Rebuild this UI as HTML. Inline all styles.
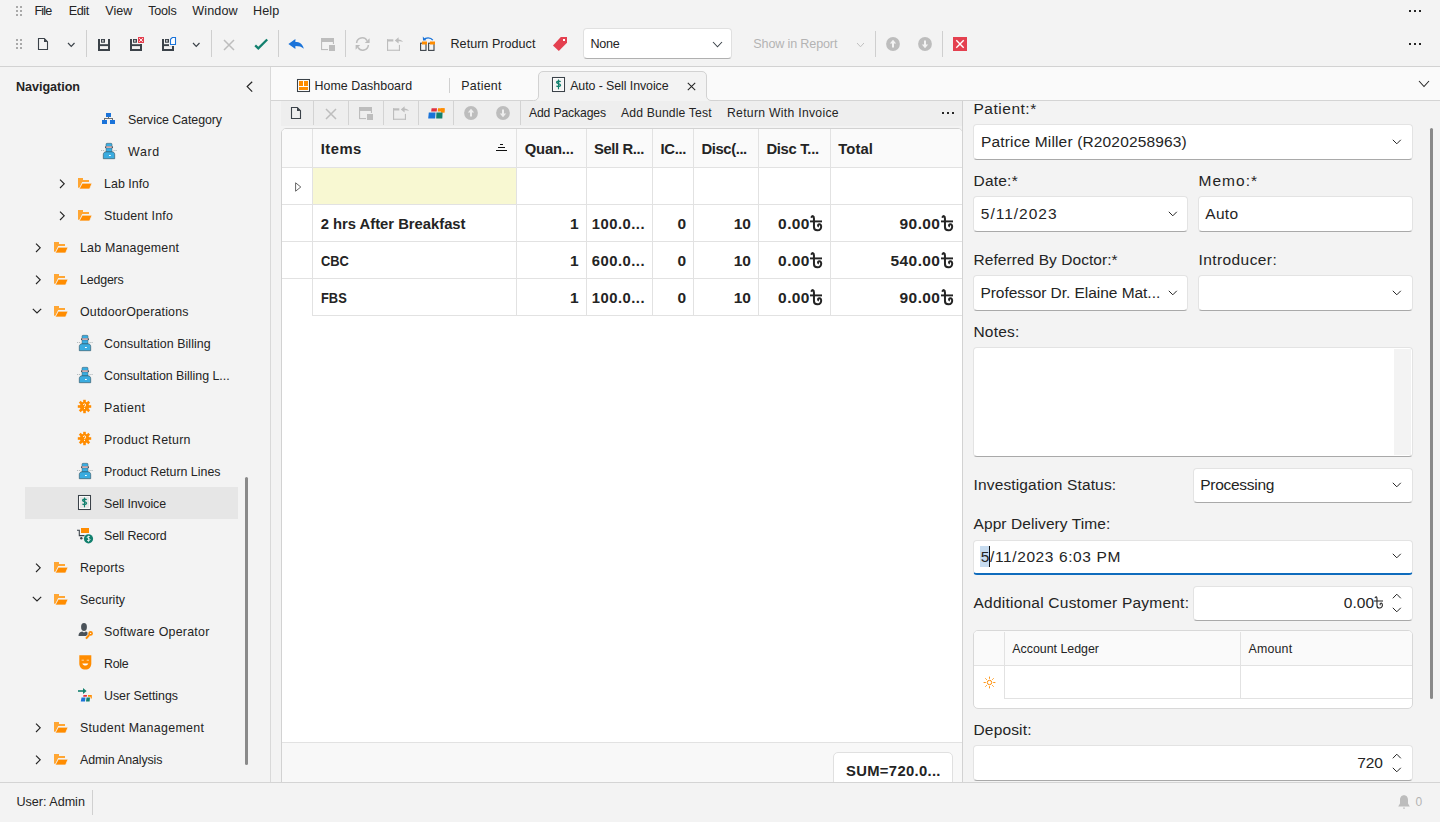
<!DOCTYPE html>
<html><head><meta charset="utf-8"><title>Sell Invoice</title>
<style>
html,body{margin:0;padding:0;}
body{width:1440px;height:822px;overflow:hidden;position:relative;background:#f3f3f3;font-family:"Liberation Sans", sans-serif;color:#242424;}
.t{position:absolute;line-height:1;white-space:nowrap;}
svg{display:block;overflow:visible}
</style></head><body>
<svg style="position:absolute;left:16px;top:6px" width="6" height="10" viewBox="0 0 6 10"><rect x="0" y="0" width="2" height="2" fill="#a9a9a9"/><rect x="0" y="4" width="2" height="2" fill="#a9a9a9"/><rect x="0" y="8" width="2" height="2" fill="#a9a9a9"/><rect x="4" y="0" width="2" height="2" fill="#a9a9a9"/><rect x="4" y="4" width="2" height="2" fill="#a9a9a9"/><rect x="4" y="8" width="2" height="2" fill="#a9a9a9"/></svg>
<div class="t" id="t1" style="left:34.40px;top:5px;font-size:12.6px;font-weight:normal;color:#242424;letter-spacing:-0.833px;">File</div>
<div class="t" id="t2" style="left:68.70px;top:5px;font-size:12.6px;font-weight:normal;color:#242424;letter-spacing:-0.400px;">Edit</div>
<div class="t" id="t3" style="left:105.20px;top:5px;font-size:12.6px;font-weight:normal;color:#242424;letter-spacing:0.033px;">View</div>
<div class="t" id="t4" style="left:148.30px;top:5px;font-size:12.6px;font-weight:normal;color:#242424;letter-spacing:-0.250px;">Tools</div>
<div class="t" id="t5" style="left:192.30px;top:5px;font-size:12.6px;font-weight:normal;color:#242424;letter-spacing:0.100px;">Window</div>
<div class="t" id="t6" style="left:253.00px;top:5px;font-size:12.6px;font-weight:normal;color:#242424;letter-spacing:0.083px;">Help</div>
<svg style="position:absolute;left:1409px;top:10px" width="13" height="3" viewBox="0 0 13 3"><rect x="0" y="0" width="2" height="2" fill="#262626"/><rect x="5" y="0" width="2" height="2" fill="#262626"/><rect x="10" y="0" width="2" height="2" fill="#262626"/></svg>
<svg style="position:absolute;left:16px;top:39px" width="6" height="10" viewBox="0 0 6 10"><rect x="0" y="0" width="2" height="2" fill="#a9a9a9"/><rect x="0" y="4" width="2" height="2" fill="#a9a9a9"/><rect x="0" y="8" width="2" height="2" fill="#a9a9a9"/><rect x="4" y="0" width="2" height="2" fill="#a9a9a9"/><rect x="4" y="4" width="2" height="2" fill="#a9a9a9"/><rect x="4" y="8" width="2" height="2" fill="#a9a9a9"/></svg>
<svg style="position:absolute;left:37.5px;top:37.5px" width="11" height="13" viewBox="0 0 11 13"><path d="M0.5 0.5 H6.3 L9.5 3.7 V11.5 H0.5 Z" fill="none" stroke="#3b4249" stroke-width="1.1"/><path d="M6 0.5 V4 H9.6 Z" fill="#3b4249"/></svg>
<svg style="position:absolute;left:66.8px;top:41.8px" width="8.5" height="5.3" viewBox="0 0 8.5 5.3"><path d="M1 1 L4.25 4.3 L7.5 1" fill="none" stroke="#3b4249" stroke-width="1.2"/></svg>
<div style="position:absolute;left:86px;top:30px;width:1px;height:27px;background:#cfcfcf"></div>
<svg style="position:absolute;left:98px;top:39px" width="12" height="12" viewBox="0 0 12 12"><rect x="0" y="0" width="2" height="12" fill="#3b4249"/><rect x="10" y="0" width="2" height="12" fill="#3b4249"/><rect x="0" y="10" width="12" height="2" fill="#3b4249"/><rect x="0" y="5.2" width="12" height="1.9" fill="#3b4249"/><rect x="3" y="0" width="4" height="3.7" fill="#3b4249"/><rect x="4.3" y="0.9" width="1.2" height="1.9" fill="#f3f3f3"/></svg>
<svg style="position:absolute;left:130px;top:39px" width="12" height="12" viewBox="0 0 12 12"><rect x="0" y="0" width="2" height="12" fill="#3b4249"/><rect x="10" y="0" width="2" height="12" fill="#3b4249"/><rect x="0" y="10" width="12" height="2" fill="#3b4249"/><rect x="0" y="5.2" width="12" height="1.9" fill="#3b4249"/><rect x="3" y="0" width="4" height="3.7" fill="#3b4249"/><rect x="4.3" y="0.9" width="1.2" height="1.9" fill="#f3f3f3"/></svg>
<svg style="position:absolute;left:137px;top:36px" width="8" height="8" viewBox="0 0 8 8"><rect x="0" y="0" width="8" height="8" fill="#f3f3f3"/><rect x="1" y="1" width="6" height="6" fill="#e4404f"/><path d="M2.2 2.2 L5.8 5.8 M5.8 2.2 L2.2 5.8" stroke="#fff" stroke-width="0.9"/></svg>
<svg style="position:absolute;left:162px;top:39px" width="12" height="12" viewBox="0 0 12 12"><rect x="0" y="0" width="2" height="12" fill="#3b4249"/><rect x="10" y="0" width="2" height="12" fill="#3b4249"/><rect x="0" y="10" width="12" height="2" fill="#3b4249"/><rect x="0" y="5.2" width="12" height="1.9" fill="#3b4249"/><rect x="3" y="0" width="4" height="3.7" fill="#3b4249"/><rect x="4.3" y="0.9" width="1.2" height="1.9" fill="#f3f3f3"/></svg>
<svg style="position:absolute;left:169px;top:36px" width="8" height="10" viewBox="0 0 8 10"><rect x="0" y="0" width="8" height="10" fill="#f3f3f3"/><path d="M3.3 1.5 H6.5 V8.5 H1.5 V3.3 Z" fill="#fff" stroke="#1a73d9" stroke-width="1.1"/></svg>
<svg style="position:absolute;left:191.8px;top:41.8px" width="8.5" height="5.3" viewBox="0 0 8.5 5.3"><path d="M1 1 L4.25 4.3 L7.5 1" fill="none" stroke="#3b4249" stroke-width="1.2"/></svg>
<div style="position:absolute;left:211px;top:30px;width:1px;height:27px;background:#cfcfcf"></div>
<svg style="position:absolute;left:223px;top:38.5px" width="12" height="12" viewBox="0 0 12 12"><path d="M1 1 L11 11 M11 1 L1 11" stroke="#bdbdbd" stroke-width="1.5"/></svg>
<svg style="position:absolute;left:253px;top:38px" width="16" height="13" viewBox="0 0 16 13"><path d="M2.2 7.3 L5.3 10.3 L14.2 1.5" fill="none" stroke="#12806e" stroke-width="2.3"/></svg>
<div style="position:absolute;left:278px;top:30px;width:1px;height:27px;background:#cfcfcf"></div>
<svg style="position:absolute;left:288px;top:38px" width="17" height="12" viewBox="0 0 17 12"><path d="M0.4 6 L7.4 1.1 V4.1 C11.5 4.1 14.8 6 15.8 10.8 C13.6 8.6 11 7.9 7.4 7.9 V11 Z" fill="#1a73d9"/></svg>
<svg style="position:absolute;left:321px;top:38px" width="15" height="13" viewBox="0 0 15 13"><rect x="0" y="0" width="13" height="4" fill="#bdbdbd"/><rect x="0" y="0" width="1.1" height="12" fill="#bdbdbd"/><rect x="0" y="11" width="7" height="1.1" fill="#bdbdbd"/><rect x="11.9" y="0" width="1.1" height="6" fill="#bdbdbd"/><rect x="8" y="7" width="6" height="6" fill="#bdbdbd"/></svg>
<div style="position:absolute;left:345px;top:30px;width:1px;height:27px;background:#cfcfcf"></div>
<svg style="position:absolute;left:355px;top:37px" width="15" height="14" viewBox="0 0 15 14"><path d="M1.6 6 A5.6 5.6 0 0 1 12 3.6" fill="none" stroke="#bdbdbd" stroke-width="1.5"/><path d="M14.6 1.2 V6 H9.8 Z" fill="#bdbdbd"/><path d="M13.4 8 A5.6 5.6 0 0 1 3 10.4" fill="none" stroke="#bdbdbd" stroke-width="1.5"/><path d="M0.6 12.8 V8 H5.2 Z" fill="#bdbdbd"/></svg>
<svg style="position:absolute;left:387px;top:37px" width="17" height="15" viewBox="0 0 17 15"><rect x="0" y="2.3" width="6.3" height="2.2" fill="#bdbdbd"/><rect x="0" y="2.3" width="1.1" height="11.5" fill="#bdbdbd"/><rect x="0" y="12.7" width="13" height="1.1" fill="#bdbdbd"/><rect x="11.9" y="7.9" width="1.1" height="5.9" fill="#bdbdbd"/><path d="M7.8 3.6 L11.6 0.2 V2.4 C13.5 2.4 15.2 3.2 16 5 C14.8 4.3 13.3 4 11.6 4.2 V6.6 Z" fill="#bdbdbd"/></svg>
<svg style="position:absolute;left:419px;top:35.5px" width="17" height="15" viewBox="0 0 17 15"><path d="M5 3.8 C6.5 1.3 11.5 0.8 13.8 4.2" fill="none" stroke="#1a73d9" stroke-width="1.3"/><path d="M3.8 0.6 L4 4.6 L7.4 4.2 Z" fill="#1a73d9"/><rect x="1.6" y="7.2" width="5.4" height="7.2" fill="none" stroke="#3b4249" stroke-width="1.1"/><rect x="9.6" y="7.2" width="5.4" height="7.2" fill="none" stroke="#3b4249" stroke-width="1.1"/><rect x="3" y="5.5" width="5" height="3" fill="#ff8c00"/><rect x="11" y="5.5" width="5" height="3" fill="#ff8c00"/></svg>
<div class="t" id="t7" style="left:450.50px;top:38px;font-size:12.6px;font-weight:normal;color:#242424;letter-spacing:0.015px;">Return Product</div>
<svg style="position:absolute;left:553px;top:37px" width="15" height="15" viewBox="0 0 15 15"><path d="M7.8 0 H14 V5.8 L5.8 14 L0 8.4 Z" fill="#e4404f"/><rect x="10" y="2" width="2" height="2" fill="#fff"/></svg>
<div style="position:absolute;left:583px;top:28px;width:149px;height:31px;background:#fff;border:1px solid #e0e0e0;border-bottom-color:#b0b0b0;border-radius:4px;box-sizing:border-box"></div>
<div class="t" id="t8" style="left:590.50px;top:38px;font-size:12.6px;font-weight:normal;color:#242424;letter-spacing:-0.267px;">None</div>
<svg style="position:absolute;left:711.7px;top:41px" width="11" height="6.8" viewBox="0 0 11 6.8"><path d="M1 1 L5.5 5.8 L10 1" fill="none" stroke="#3b4249" stroke-width="1.05"/></svg>
<div class="t" id="t9" style="left:753.30px;top:38px;font-size:12.6px;font-weight:normal;color:#b3b3b3;letter-spacing:-0.154px;">Show in Report</div>
<svg style="position:absolute;left:855.5px;top:42.3px" width="9" height="5.8" viewBox="0 0 9 5.8"><path d="M1 1 L4.5 4.8 L8 1" fill="none" stroke="#c0c0c0" stroke-width="1.0"/></svg>
<div style="position:absolute;left:875px;top:30.5px;width:1px;height:26.5px;background:#cfcfcf"></div>
<svg style="position:absolute;left:886px;top:37px" width="14" height="14" viewBox="0 0 14 14"><circle cx="7" cy="7" r="6.9" fill="#bdbdbd"/><path d="M7 2.8 L10.2 6.4 H8 V10.4 H6 V6.4 H3.8 Z" fill="#f3f3f3"/></svg>
<svg style="position:absolute;left:918px;top:37px" width="14" height="14" viewBox="0 0 14 14"><circle cx="7" cy="7" r="6.9" fill="#bdbdbd"/><path d="M7 11.2 L10.2 7.6 H8 V3.6 H6 V7.6 H3.8 Z" fill="#f3f3f3"/></svg>
<div style="position:absolute;left:942px;top:30.5px;width:1px;height:26.5px;background:#cfcfcf"></div>
<svg style="position:absolute;left:953px;top:37px" width="14" height="14" viewBox="0 0 14 14"><rect width="14" height="14" fill="#e4404f"/><path d="M3.3 3.3 L10.7 10.7 M10.7 3.3 L3.3 10.7" stroke="#fff" stroke-width="1.4"/></svg>
<svg style="position:absolute;left:1409px;top:43px" width="13" height="3" viewBox="0 0 13 3"><rect x="0" y="0" width="2" height="2" fill="#262626"/><rect x="5" y="0" width="2" height="2" fill="#262626"/><rect x="10" y="0" width="2" height="2" fill="#262626"/></svg>
<div style="position:absolute;left:0px;top:66px;width:1440px;height:1px;background:#d2d2d2"></div>
<div style="position:absolute;left:270px;top:67px;width:1px;height:715px;background:#d9d9d9"></div>
<div class="t" id="t10" style="left:16.00px;top:81px;font-size:12.6px;font-weight:bold;color:#242424;letter-spacing:-0.044px;">Navigation</div>
<svg style="position:absolute;left:246px;top:81px" width="8" height="12" viewBox="0 0 8 12"><path d="M6.2 0.8 L1.2 5.6 L6.2 10.6" fill="none" stroke="#242424" stroke-width="1.2"/></svg>
<div style="position:absolute;left:25px;top:487px;width:213px;height:32px;background:#e6e6e6"></div>
<svg style="position:absolute;left:102px;top:113px" width="13" height="11" viewBox="0 0 13 11"><rect x="4" y="0" width="5" height="4" fill="#1a73d9"/><rect x="0" y="7" width="5" height="4" fill="#1a73d9"/><rect x="8" y="7" width="5" height="4" fill="#1a73d9"/><rect x="6" y="4" width="1" height="1" fill="#707070"/><rect x="2" y="5" width="9" height="1" fill="#707070"/><rect x="2" y="6" width="1" height="1" fill="#707070"/><rect x="10" y="6" width="1" height="1" fill="#707070"/></svg>
<div class="t" id="t11" style="left:128.00px;top:114px;font-size:12.4px;font-weight:normal;color:#242424;letter-spacing:-0.067px;">Service Category</div>
<svg style="position:absolute;left:101px;top:143px" width="16" height="16" viewBox="0 0 16 16"><path d="M0 7.5 H3.5 M12.5 7.5 H16" stroke="#99a3a8" stroke-width="0.7" stroke-dasharray="1.2 0.8"/><rect x="5" y="0.3" width="6" height="3.4" rx="1" fill="#3aace0" stroke="#3d5560" stroke-width="0.5"/><rect x="4" y="3.3" width="8" height="1.8" fill="#4a5a62"/><rect x="5.2" y="3.4" width="5.6" height="1.6" fill="#f4c4c8"/><rect x="5" y="5" width="6" height="4" fill="#3aace0" stroke="#3d5560" stroke-width="0.4"/><path d="M2.3 15.7 V11.5 C2.3 9.8 3.5 8.8 5 8.8 H11 C12.5 8.8 13.7 9.8 13.7 11.5 V15.7 Z" fill="#3aace0" stroke="#2f4d5a" stroke-width="0.6"/><rect x="8" y="12" width="1.8" height="1" fill="#fff"/></svg>
<div class="t" id="t12" style="left:128.00px;top:146px;font-size:12.4px;font-weight:normal;color:#242424;letter-spacing:0.700px;">Ward</div>
<svg style="position:absolute;left:58.5px;top:178.5px" width="7" height="10" viewBox="0 0 7 10"><path d="M1 0.6 L5.2 4.8 L1 9" fill="none" stroke="#242424" stroke-width="1.15"/></svg>
<svg style="position:absolute;left:78px;top:178px" width="15" height="12" viewBox="0 0 15 12"><path d="M0 0 H5 V2 H11 V4 H4.2 L1.6 9.8 H0 Z" fill="#ffa633"/><path d="M4.3 5.2 H14 L11.6 11 H1.2 Z" fill="#ff8c00" stroke="#f3f3f3" stroke-width="0.7"/></svg>
<div class="t" id="t13" style="left:104.00px;top:178px;font-size:12.4px;font-weight:normal;color:#242424;letter-spacing:0.057px;">Lab Info</div>
<svg style="position:absolute;left:58.5px;top:210.5px" width="7" height="10" viewBox="0 0 7 10"><path d="M1 0.6 L5.2 4.8 L1 9" fill="none" stroke="#242424" stroke-width="1.15"/></svg>
<svg style="position:absolute;left:78px;top:210px" width="15" height="12" viewBox="0 0 15 12"><path d="M0 0 H5 V2 H11 V4 H4.2 L1.6 9.8 H0 Z" fill="#ffa633"/><path d="M4.3 5.2 H14 L11.6 11 H1.2 Z" fill="#ff8c00" stroke="#f3f3f3" stroke-width="0.7"/></svg>
<div class="t" id="t14" style="left:104.00px;top:210px;font-size:12.4px;font-weight:normal;color:#242424;letter-spacing:0.182px;">Student Info</div>
<svg style="position:absolute;left:34.5px;top:242.5px" width="7" height="10" viewBox="0 0 7 10"><path d="M1 0.6 L5.2 4.8 L1 9" fill="none" stroke="#242424" stroke-width="1.15"/></svg>
<svg style="position:absolute;left:54px;top:242px" width="15" height="12" viewBox="0 0 15 12"><path d="M0 0 H5 V2 H11 V4 H4.2 L1.6 9.8 H0 Z" fill="#ffa633"/><path d="M4.3 5.2 H14 L11.6 11 H1.2 Z" fill="#ff8c00" stroke="#f3f3f3" stroke-width="0.7"/></svg>
<div class="t" id="t15" style="left:80.00px;top:242px;font-size:12.4px;font-weight:normal;color:#242424;letter-spacing:0.192px;">Lab Management</div>
<svg style="position:absolute;left:34.5px;top:274.5px" width="7" height="10" viewBox="0 0 7 10"><path d="M1 0.6 L5.2 4.8 L1 9" fill="none" stroke="#242424" stroke-width="1.15"/></svg>
<svg style="position:absolute;left:54px;top:274px" width="15" height="12" viewBox="0 0 15 12"><path d="M0 0 H5 V2 H11 V4 H4.2 L1.6 9.8 H0 Z" fill="#ffa633"/><path d="M4.3 5.2 H14 L11.6 11 H1.2 Z" fill="#ff8c00" stroke="#f3f3f3" stroke-width="0.7"/></svg>
<div class="t" id="t16" style="left:80.00px;top:274px;font-size:12.4px;font-weight:normal;color:#242424;letter-spacing:-0.167px;">Ledgers</div>
<svg style="position:absolute;left:31.8px;top:308px" width="11" height="7" viewBox="0 0 11 7"><path d="M0.8 0.8 L5 5 L9.2 0.8" fill="none" stroke="#242424" stroke-width="1.15"/></svg>
<svg style="position:absolute;left:54px;top:306px" width="15" height="12" viewBox="0 0 15 12"><path d="M0 0 H5 V2 H11 V4 H4.2 L1.6 9.8 H0 Z" fill="#ffa633"/><path d="M4.3 5.2 H14 L11.6 11 H1.2 Z" fill="#ff8c00" stroke="#f3f3f3" stroke-width="0.7"/></svg>
<div class="t" id="t17" style="left:80.00px;top:306px;font-size:12.4px;font-weight:normal;color:#242424;letter-spacing:0.194px;">OutdoorOperations</div>
<svg style="position:absolute;left:77px;top:335px" width="16" height="16" viewBox="0 0 16 16"><path d="M0 7.5 H3.5 M12.5 7.5 H16" stroke="#99a3a8" stroke-width="0.7" stroke-dasharray="1.2 0.8"/><rect x="5" y="0.3" width="6" height="3.4" rx="1" fill="#3aace0" stroke="#3d5560" stroke-width="0.5"/><rect x="4" y="3.3" width="8" height="1.8" fill="#4a5a62"/><rect x="5.2" y="3.4" width="5.6" height="1.6" fill="#f4c4c8"/><rect x="5" y="5" width="6" height="4" fill="#3aace0" stroke="#3d5560" stroke-width="0.4"/><path d="M2.3 15.7 V11.5 C2.3 9.8 3.5 8.8 5 8.8 H11 C12.5 8.8 13.7 9.8 13.7 11.5 V15.7 Z" fill="#3aace0" stroke="#2f4d5a" stroke-width="0.6"/><rect x="8" y="12" width="1.8" height="1" fill="#fff"/></svg>
<div class="t" id="t18" style="left:104.00px;top:338px;font-size:12.4px;font-weight:normal;color:#242424;letter-spacing:0.068px;">Consultation Billing</div>
<svg style="position:absolute;left:77px;top:367px" width="16" height="16" viewBox="0 0 16 16"><path d="M0 7.5 H3.5 M12.5 7.5 H16" stroke="#99a3a8" stroke-width="0.7" stroke-dasharray="1.2 0.8"/><rect x="5" y="0.3" width="6" height="3.4" rx="1" fill="#3aace0" stroke="#3d5560" stroke-width="0.5"/><rect x="4" y="3.3" width="8" height="1.8" fill="#4a5a62"/><rect x="5.2" y="3.4" width="5.6" height="1.6" fill="#f4c4c8"/><rect x="5" y="5" width="6" height="4" fill="#3aace0" stroke="#3d5560" stroke-width="0.4"/><path d="M2.3 15.7 V11.5 C2.3 9.8 3.5 8.8 5 8.8 H11 C12.5 8.8 13.7 9.8 13.7 11.5 V15.7 Z" fill="#3aace0" stroke="#2f4d5a" stroke-width="0.6"/><rect x="8" y="12" width="1.8" height="1" fill="#fff"/></svg>
<div class="t" id="t19" style="left:104.00px;top:370px;font-size:12.4px;font-weight:normal;color:#242424;letter-spacing:-0.017px;">Consultation Billing L...</div>
<svg style="position:absolute;left:78px;top:400px" width="13" height="13" viewBox="0 0 13 13"><rect x="5.2" y="-0.2" width="2.6" height="3" fill="#ff8c00" transform="rotate(0 6.5 6.5)"/><rect x="5.2" y="-0.2" width="2.6" height="3" fill="#ff8c00" transform="rotate(45 6.5 6.5)"/><rect x="5.2" y="-0.2" width="2.6" height="3" fill="#ff8c00" transform="rotate(90 6.5 6.5)"/><rect x="5.2" y="-0.2" width="2.6" height="3" fill="#ff8c00" transform="rotate(135 6.5 6.5)"/><rect x="5.2" y="-0.2" width="2.6" height="3" fill="#ff8c00" transform="rotate(180 6.5 6.5)"/><rect x="5.2" y="-0.2" width="2.6" height="3" fill="#ff8c00" transform="rotate(225 6.5 6.5)"/><rect x="5.2" y="-0.2" width="2.6" height="3" fill="#ff8c00" transform="rotate(270 6.5 6.5)"/><rect x="5.2" y="-0.2" width="2.6" height="3" fill="#ff8c00" transform="rotate(315 6.5 6.5)"/><circle cx="6.5" cy="6.5" r="4.7" fill="#ff8c00"/><path d="M5.3 5 C5.3 3.5 7.7 3.5 7.7 5 C7.7 5.9 6.5 6 6.5 7.1" fill="none" stroke="#fff" stroke-width="0.9"/><rect x="6" y="7.9" width="1" height="1" fill="#fff"/></svg>
<div class="t" id="t20" style="left:104.00px;top:402px;font-size:12.4px;font-weight:normal;color:#242424;letter-spacing:0.400px;">Patient</div>
<svg style="position:absolute;left:78px;top:432px" width="13" height="13" viewBox="0 0 13 13"><rect x="5.2" y="-0.2" width="2.6" height="3" fill="#ff8c00" transform="rotate(0 6.5 6.5)"/><rect x="5.2" y="-0.2" width="2.6" height="3" fill="#ff8c00" transform="rotate(45 6.5 6.5)"/><rect x="5.2" y="-0.2" width="2.6" height="3" fill="#ff8c00" transform="rotate(90 6.5 6.5)"/><rect x="5.2" y="-0.2" width="2.6" height="3" fill="#ff8c00" transform="rotate(135 6.5 6.5)"/><rect x="5.2" y="-0.2" width="2.6" height="3" fill="#ff8c00" transform="rotate(180 6.5 6.5)"/><rect x="5.2" y="-0.2" width="2.6" height="3" fill="#ff8c00" transform="rotate(225 6.5 6.5)"/><rect x="5.2" y="-0.2" width="2.6" height="3" fill="#ff8c00" transform="rotate(270 6.5 6.5)"/><rect x="5.2" y="-0.2" width="2.6" height="3" fill="#ff8c00" transform="rotate(315 6.5 6.5)"/><circle cx="6.5" cy="6.5" r="4.7" fill="#ff8c00"/><path d="M5.3 5 C5.3 3.5 7.7 3.5 7.7 5 C7.7 5.9 6.5 6 6.5 7.1" fill="none" stroke="#fff" stroke-width="0.9"/><rect x="6" y="7.9" width="1" height="1" fill="#fff"/></svg>
<div class="t" id="t21" style="left:104.00px;top:434px;font-size:12.4px;font-weight:normal;color:#242424;letter-spacing:0.238px;">Product Return</div>
<svg style="position:absolute;left:77px;top:463px" width="16" height="16" viewBox="0 0 16 16"><path d="M0 7.5 H3.5 M12.5 7.5 H16" stroke="#99a3a8" stroke-width="0.7" stroke-dasharray="1.2 0.8"/><rect x="5" y="0.3" width="6" height="3.4" rx="1" fill="#3aace0" stroke="#3d5560" stroke-width="0.5"/><rect x="4" y="3.3" width="8" height="1.8" fill="#4a5a62"/><rect x="5.2" y="3.4" width="5.6" height="1.6" fill="#f4c4c8"/><rect x="5" y="5" width="6" height="4" fill="#3aace0" stroke="#3d5560" stroke-width="0.4"/><path d="M2.3 15.7 V11.5 C2.3 9.8 3.5 8.8 5 8.8 H11 C12.5 8.8 13.7 9.8 13.7 11.5 V15.7 Z" fill="#3aace0" stroke="#2f4d5a" stroke-width="0.6"/><rect x="8" y="12" width="1.8" height="1" fill="#fff"/></svg>
<div class="t" id="t22" style="left:104.00px;top:466px;font-size:12.4px;font-weight:normal;color:#242424;letter-spacing:0.005px;">Product Return Lines</div>
<svg style="position:absolute;left:78px;top:495px" width="13" height="15" viewBox="0 0 13 15"><rect x="0.5" y="0.5" width="12" height="14" fill="#fff" stroke="#3b4249" stroke-width="1.05"/><rect x="2" y="2" width="9" height="11" fill="#e6e6e6"/><path d="M8.4 5 C8.2 4 4.6 3.8 4.6 5.3 C4.6 6.9 8.5 6.4 8.5 8.2 C8.5 9.8 4.8 9.7 4.5 8.8" fill="none" stroke="#12806e" stroke-width="1.4"/><path d="M6.5 2.5 V12.3" stroke="#12806e" stroke-width="1.1"/></svg>
<div class="t" id="t23" style="left:104.00px;top:498px;font-size:12.4px;font-weight:normal;color:#242424;letter-spacing:-0.118px;">Sell Invoice</div>
<svg style="position:absolute;left:77px;top:527.5px" width="16" height="16" viewBox="0 0 16 16"><rect x="4" y="0" width="8" height="5" fill="#ff8c00"/><path d="M0 2.3 H2.3 V7.6 H7.5" fill="none" stroke="#3b4249" stroke-width="1.1"/><circle cx="4.3" cy="10.2" r="1.2" fill="#3b4249"/><circle cx="11.5" cy="10.8" r="4.6" fill="#12806e"/><path d="M13 9 C12.8 8.2 10.2 8.1 10.2 9.3 C10.2 10.6 13 10.2 13 11.6 C13 12.9 10.4 12.9 10 12.2" fill="none" stroke="#fff" stroke-width="0.9"/><path d="M11.5 7.8 V13.8" stroke="#fff" stroke-width="0.7"/></svg>
<div class="t" id="t24" style="left:104.00px;top:530px;font-size:12.4px;font-weight:normal;color:#242424;letter-spacing:-0.130px;">Sell Record</div>
<svg style="position:absolute;left:34.5px;top:562.5px" width="7" height="10" viewBox="0 0 7 10"><path d="M1 0.6 L5.2 4.8 L1 9" fill="none" stroke="#242424" stroke-width="1.15"/></svg>
<svg style="position:absolute;left:54px;top:562px" width="15" height="12" viewBox="0 0 15 12"><path d="M0 0 H5 V2 H11 V4 H4.2 L1.6 9.8 H0 Z" fill="#ffa633"/><path d="M4.3 5.2 H14 L11.6 11 H1.2 Z" fill="#ff8c00" stroke="#f3f3f3" stroke-width="0.7"/></svg>
<div class="t" id="t25" style="left:80.00px;top:562px;font-size:12.4px;font-weight:normal;color:#242424;letter-spacing:0.167px;">Reports</div>
<svg style="position:absolute;left:31.8px;top:596px" width="11" height="7" viewBox="0 0 11 7"><path d="M0.8 0.8 L5 5 L9.2 0.8" fill="none" stroke="#242424" stroke-width="1.15"/></svg>
<svg style="position:absolute;left:54px;top:594px" width="15" height="12" viewBox="0 0 15 12"><path d="M0 0 H5 V2 H11 V4 H4.2 L1.6 9.8 H0 Z" fill="#ffa633"/><path d="M4.3 5.2 H14 L11.6 11 H1.2 Z" fill="#ff8c00" stroke="#f3f3f3" stroke-width="0.7"/></svg>
<div class="t" id="t26" style="left:80.00px;top:594px;font-size:12.4px;font-weight:normal;color:#242424;letter-spacing:0.043px;">Security</div>
<svg style="position:absolute;left:77.5px;top:623px" width="16" height="17" viewBox="0 0 16 17"><ellipse cx="6" cy="4" rx="2.9" ry="3.9" fill="#4a5259"/><path d="M0.5 13 C0.5 10 2 9 4.2 8.6 L6 9.6 L7.8 8.6 C8.6 8.8 9.2 9 9.5 9.4 V11.5 L8 13 Z" fill="#4a5259"/><circle cx="12.6" cy="10.4" r="2.3" fill="#ff8c00"/><circle cx="12.6" cy="10.4" r="0.7" fill="#f3f3f3"/><path d="M11.2 12 L8 15.6" stroke="#ff8c00" stroke-width="2"/></svg>
<div class="t" id="t27" style="left:104.00px;top:626px;font-size:12.4px;font-weight:normal;color:#242424;letter-spacing:0.256px;">Software Operator</div>
<svg style="position:absolute;left:79px;top:655px" width="13" height="15" viewBox="0 0 13 15"><path d="M0.3 0.3 H12.3 V8.5 C12.3 12.2 9.8 14.6 6.3 14.6 C2.8 14.6 0.3 12.2 0.3 8.5 Z" fill="#ff8c00"/><path d="M2.6 5.2 H4.9 M7.7 5.2 H10" stroke="#ffe0b0" stroke-width="0.9"/><path d="M3.3 8.5 C4.5 11.3 8.1 11.3 9.3 8.5 Z" fill="#fff"/></svg>
<div class="t" id="t28" style="left:104.00px;top:658px;font-size:12.4px;font-weight:normal;color:#242424;letter-spacing:-0.300px;">Role</div>
<svg style="position:absolute;left:77.5px;top:687.5px" width="15" height="15" viewBox="0 0 15 15"><path d="M0 3 H6" stroke="#12806e" stroke-width="1.6"/><path d="M5 0 L8.6 3 L5 6 Z" fill="#12806e"/><path d="M5.5 7 H9 L8.8 8.8 H5.2 Z" fill="#e0303f"/><path d="M10 7 H13.8 V10.5 H12.6 V8.8 H10 Z" fill="#ff8c00"/><path d="M3.5 9.5 H7.5 L7 13.5 H2.8 Z" fill="#1a73d9"/><path d="M8.5 9.5 H12 L11.6 13.5 H8 Z" fill="#12806e"/></svg>
<div class="t" id="t29" style="left:104.00px;top:690px;font-size:12.4px;font-weight:normal;color:#242424;letter-spacing:-0.033px;">User Settings</div>
<svg style="position:absolute;left:34.5px;top:722.5px" width="7" height="10" viewBox="0 0 7 10"><path d="M1 0.6 L5.2 4.8 L1 9" fill="none" stroke="#242424" stroke-width="1.15"/></svg>
<svg style="position:absolute;left:54px;top:722px" width="15" height="12" viewBox="0 0 15 12"><path d="M0 0 H5 V2 H11 V4 H4.2 L1.6 9.8 H0 Z" fill="#ffa633"/><path d="M4.3 5.2 H14 L11.6 11 H1.2 Z" fill="#ff8c00" stroke="#f3f3f3" stroke-width="0.7"/></svg>
<div class="t" id="t30" style="left:80.00px;top:722px;font-size:12.4px;font-weight:normal;color:#242424;letter-spacing:0.318px;">Student Management</div>
<svg style="position:absolute;left:34.5px;top:754.5px" width="7" height="10" viewBox="0 0 7 10"><path d="M1 0.6 L5.2 4.8 L1 9" fill="none" stroke="#242424" stroke-width="1.15"/></svg>
<svg style="position:absolute;left:54px;top:754px" width="15" height="12" viewBox="0 0 15 12"><path d="M0 0 H5 V2 H11 V4 H4.2 L1.6 9.8 H0 Z" fill="#ffa633"/><path d="M4.3 5.2 H14 L11.6 11 H1.2 Z" fill="#ff8c00" stroke="#f3f3f3" stroke-width="0.7"/></svg>
<div class="t" id="t31" style="left:80.00px;top:754px;font-size:12.4px;font-weight:normal;color:#242424;letter-spacing:-0.123px;">Admin Analysis</div>
<div style="position:absolute;left:245px;top:477px;width:3px;height:288px;background:#8a8a8a;border-radius:1.5px"></div>
<div style="position:absolute;left:271px;top:67px;width:1169px;height:33px;background:#fafafa"></div>
<div style="position:absolute;left:271px;top:100px;width:262px;height:1px;background:#d4d4d4"></div>
<div style="position:absolute;left:712px;top:100px;width:728px;height:1px;background:#d4d4d4"></div>
<svg style="position:absolute;left:297px;top:79px" width="13" height="13" viewBox="0 0 13 13"><rect x="0.5" y="0.5" width="12" height="12" fill="#fff" stroke="#3b4249" stroke-width="1.05"/><rect x="2" y="2" width="4" height="5" fill="#ff8c00"/><rect x="7" y="2" width="4" height="5" fill="#ff8c00"/><rect x="2" y="8" width="9" height="3" fill="#ff8c00"/></svg>
<div class="t" id="t32" style="left:314.50px;top:80px;font-size:12.4px;font-weight:normal;color:#242424;letter-spacing:0.038px;">Home Dashboard</div>
<div style="position:absolute;left:449px;top:78px;width:1px;height:15px;background:#d0d0d0"></div>
<div class="t" id="t33" style="left:461.30px;top:80px;font-size:12.4px;font-weight:normal;color:#242424;letter-spacing:0.250px;">Patient</div>
<svg style="position:absolute;left:528px;top:66px" width="190" height="35" viewBox="0 0 190 35"><path d="M0 35 H5.5 A4.5 4.5 0 0 0 10.5 30.5 V10 A4.5 4.5 0 0 1 15 5.5 H174 A4.5 4.5 0 0 1 178.5 10 V30.5 A4.5 4.5 0 0 0 183 35 Z" fill="#f3f3f3"/><path d="M0 34.5 H5.5 A4.5 4.5 0 0 0 10.5 30 V10 A4.5 4.5 0 0 1 15 5.5 H174 A4.5 4.5 0 0 1 178.5 10 V30 A4.5 4.5 0 0 0 183 34.5 H190" fill="none" stroke="#d2d2d2" stroke-width="1"/></svg>
<svg style="position:absolute;left:552px;top:77px" width="13" height="15" viewBox="0 0 13 15"><rect x="0.5" y="0.5" width="12" height="14" fill="#fff" stroke="#3b4249" stroke-width="1.05"/><rect x="2" y="2" width="9" height="11" fill="#f3f3f3"/><path d="M8.4 5 C8.2 4 4.6 3.8 4.6 5.3 C4.6 6.9 8.5 6.4 8.5 8.2 C8.5 9.8 4.8 9.7 4.5 8.8" fill="none" stroke="#12806e" stroke-width="1.4"/><path d="M6.5 2.5 V12.3" stroke="#12806e" stroke-width="1.1"/></svg>
<div class="t" id="t34" style="left:570.20px;top:80px;font-size:12.4px;font-weight:normal;color:#242424;letter-spacing:-0.083px;">Auto - Sell Invoice</div>
<svg style="position:absolute;left:687px;top:82px" width="9" height="9" viewBox="0 0 9 9"><path d="M0.8 0.8 L8.2 8.2 M8.2 0.8 L0.8 8.2" stroke="#242424" stroke-width="1.05"/></svg>
<svg style="position:absolute;left:1418px;top:79.5px" width="12" height="7.5" viewBox="0 0 12 7.5"><path d="M1 1 L6.0 6.5 L11 1" fill="none" stroke="#242424" stroke-width="1.05"/></svg>
<div style="position:absolute;left:281px;top:101px;width:682px;height:25px;background:#eeeeee"></div>
<div style="position:absolute;left:313px;top:101px;width:1px;height:24px;background:#d3d3d3"></div>
<div style="position:absolute;left:348px;top:101px;width:1px;height:24px;background:#d3d3d3"></div>
<div style="position:absolute;left:383px;top:101px;width:1px;height:24px;background:#d3d3d3"></div>
<div style="position:absolute;left:418px;top:101px;width:1px;height:24px;background:#d3d3d3"></div>
<div style="position:absolute;left:453px;top:101px;width:1px;height:24px;background:#d3d3d3"></div>
<div style="position:absolute;left:520px;top:101px;width:1px;height:24px;background:#d3d3d3"></div>
<svg style="position:absolute;left:291px;top:107px" width="11" height="13" viewBox="0 0 11 13"><path d="M0.5 0.5 H6.3 L9.5 3.7 V11.5 H0.5 Z" fill="none" stroke="#3b4249" stroke-width="1.1"/><path d="M6 0.5 V4 H9.6 Z" fill="#3b4249"/></svg>
<svg style="position:absolute;left:325px;top:107.5px" width="12" height="12" viewBox="0 0 12 12"><path d="M1 1 L11 11 M11 1 L1 11" stroke="#bdbdbd" stroke-width="1.5"/></svg>
<svg style="position:absolute;left:359px;top:107px" width="15" height="13" viewBox="0 0 15 13"><rect x="0" y="0" width="13" height="4" fill="#bdbdbd"/><rect x="0" y="0" width="1.1" height="12" fill="#bdbdbd"/><rect x="0" y="11" width="7" height="1.1" fill="#bdbdbd"/><rect x="11.9" y="0" width="1.1" height="6" fill="#bdbdbd"/><rect x="8" y="7" width="6" height="6" fill="#bdbdbd"/></svg>
<svg style="position:absolute;left:393px;top:105.5px" width="17" height="15" viewBox="0 0 17 15"><rect x="0" y="2.3" width="6.3" height="2.2" fill="#bdbdbd"/><rect x="0" y="2.3" width="1.1" height="11.5" fill="#bdbdbd"/><rect x="0" y="12.7" width="13" height="1.1" fill="#bdbdbd"/><rect x="11.9" y="7.9" width="1.1" height="5.9" fill="#bdbdbd"/><path d="M7.8 3.6 L11.6 0.2 V2.4 C13.5 2.4 15.2 3.2 16 5 C14.8 4.3 13.3 4 11.6 4.2 V6.6 Z" fill="#bdbdbd"/></svg>
<svg style="position:absolute;left:427.5px;top:107.5px" width="17" height="11" viewBox="0 0 17 11"><path d="M3.6 0.3 H9 L8.7 3.6 H3.2 Z" fill="#e0303f"/><path d="M10 0.3 H16.6 L16.3 3.6 H9.7 Z" fill="#ff8c00"/><rect x="13" y="0.3" width="3.6" height="4.4" fill="#ff8c00"/><path d="M0.8 4.6 H7.5 L7.2 10.6 H0.2 Z" fill="#1a73d9"/><path d="M8.4 4.6 H14.6 L14.3 10.6 H8.2 Z" fill="#12806e"/></svg>
<svg style="position:absolute;left:464px;top:106px" width="14" height="14" viewBox="0 0 14 14"><circle cx="7" cy="7" r="6.9" fill="#bdbdbd"/><path d="M7 2.8 L10.2 6.4 H8 V10.4 H6 V6.4 H3.8 Z" fill="#eeeeee"/></svg>
<svg style="position:absolute;left:496px;top:106px" width="14" height="14" viewBox="0 0 14 14"><circle cx="7" cy="7" r="6.9" fill="#bdbdbd"/><path d="M7 11.2 L10.2 7.6 H8 V3.6 H6 V7.6 H3.8 Z" fill="#eeeeee"/></svg>
<div class="t" id="t35" style="left:529.00px;top:107px;font-size:12.2px;font-weight:normal;color:#242424;letter-spacing:-0.145px;">Add Packages</div>
<div class="t" id="t36" style="left:621.00px;top:107px;font-size:12.2px;font-weight:normal;color:#242424;letter-spacing:0.150px;">Add Bundle Test</div>
<div class="t" id="t37" style="left:727.00px;top:107px;font-size:12.2px;font-weight:normal;color:#242424;letter-spacing:0.292px;">Return With Invoice</div>
<svg style="position:absolute;left:942px;top:112px" width="13" height="3" viewBox="0 0 13 3"><rect x="0" y="0" width="2" height="2" fill="#262626"/><rect x="5" y="0" width="2" height="2" fill="#262626"/><rect x="10" y="0" width="2" height="2" fill="#262626"/></svg>
<div style="position:absolute;left:281px;top:128px;width:682px;height:700px;background:#fff;border:1px solid #d2d2d2;border-radius:5px;box-sizing:border-box"></div>
<div style="position:absolute;left:282px;top:129px;width:680px;height:38px;background:#fafafa;border-radius:4px 4px 0 0"></div>
<div style="position:absolute;left:282px;top:167px;width:680px;height:1px;background:#e2e2e2"></div>
<div style="position:absolute;left:312px;top:129px;width:1px;height:186px;background:#e2e2e2"></div>
<div style="position:absolute;left:516px;top:129px;width:1px;height:186px;background:#e2e2e2"></div>
<div style="position:absolute;left:586px;top:129px;width:1px;height:186px;background:#e2e2e2"></div>
<div style="position:absolute;left:652px;top:129px;width:1px;height:186px;background:#e2e2e2"></div>
<div style="position:absolute;left:693px;top:129px;width:1px;height:186px;background:#e2e2e2"></div>
<div style="position:absolute;left:758px;top:129px;width:1px;height:186px;background:#e2e2e2"></div>
<div style="position:absolute;left:830px;top:129px;width:1px;height:186px;background:#e2e2e2"></div>
<div style="position:absolute;left:282px;top:204px;width:680px;height:1px;background:#e2e2e2"></div>
<div style="position:absolute;left:282px;top:241px;width:680px;height:1px;background:#e2e2e2"></div>
<div style="position:absolute;left:282px;top:278px;width:680px;height:1px;background:#e2e2e2"></div>
<div style="position:absolute;left:312px;top:315px;width:650px;height:1px;background:#e2e2e2"></div>
<div style="position:absolute;left:313px;top:168px;width:203px;height:36px;background:#f8f8d2"></div>
<svg style="position:absolute;left:295px;top:182px" width="7" height="10" viewBox="0 0 7 10"><path d="M0.6 0.8 L5.8 5 L0.6 9.2 Z" fill="none" stroke="#555" stroke-width="0.9"/></svg>
<div class="t" id="t38" style="left:320.70px;top:142px;font-size:14.8px;font-weight:bold;color:#242424;letter-spacing:0.500px;">Items</div>
<div class="t" id="t39" style="left:524.70px;top:142px;font-size:14.8px;font-weight:bold;color:#242424;letter-spacing:-0.167px;">Quan...</div>
<div class="t" id="t40" style="left:594.00px;top:142px;font-size:14.8px;font-weight:bold;color:#242424;letter-spacing:-0.375px;">Sell R...</div>
<div class="t" id="t41" style="left:660.60px;top:142px;font-size:14.8px;font-weight:bold;color:#242424;letter-spacing:-0.350px;">IC...</div>
<div class="t" id="t42" style="left:701.50px;top:142px;font-size:14.8px;font-weight:bold;color:#242424;letter-spacing:-0.400px;">Disc(...</div>
<div class="t" id="t43" style="left:766.40px;top:142px;font-size:14.8px;font-weight:bold;color:#242424;letter-spacing:-0.300px;">Disc T...</div>
<div class="t" id="t44" style="left:838.20px;top:142px;font-size:14.8px;font-weight:bold;color:#242424;letter-spacing:0.125px;">Total</div>
<svg style="position:absolute;left:496px;top:144px" width="11" height="7" viewBox="0 0 11 7"><rect x="4" y="0" width="3" height="1" fill="#111"/><rect x="2" y="3" width="7" height="1" fill="#111"/><rect x="0" y="6" width="11" height="1" fill="#111"/></svg>
<div class="t" id="t45" style="left:320.70px;top:217px;font-size:14.8px;font-weight:bold;color:#242424;letter-spacing:-0.010px;">2 hrs After Breakfast</div>
<div class="t" style="right:861.50px;top:216px;font-size:15.5px;font-weight:bold;color:#242424;">1</div>
<div class="t" id="t46" style="left:591.70px;top:217px;font-size:14.8px;font-weight:bold;color:#242424;letter-spacing:0.500px;">100.0...</div>
<div class="t" style="right:754.00px;top:216px;font-size:15.5px;font-weight:bold;color:#242424;">0</div>
<div class="t" style="right:689.00px;top:216px;font-size:15.5px;font-weight:bold;color:#242424;">10</div>
<div class="t" style="right:630.50px;top:216px;font-size:15.5px;font-weight:bold;color:#242424;letter-spacing:0.4px;margin-right:-0.4px">0.00</div>
<svg style="position:absolute;left:810px;top:215px" width="12" height="16" viewBox="0 0 12 16"><path d="M1.20 2.72 C2.40 0.32 3.96 0.64 3.96 3.52 V12.00 C3.96 14.88 5.64 15.36 7.44 15.36 C10.08 15.36 11.40 13.44 11.16 11.20 C10.92 9.28 9.60 8.80 8.64 9.44 C7.68 10.08 7.92 11.20 8.88 11.52" fill="none" stroke="#242424" stroke-width="2.0"/><path d="M0 6.40 H12" stroke="#242424" stroke-width="1.90"/></svg>
<div class="t" style="right:500.00px;top:216px;font-size:15.5px;font-weight:bold;color:#242424;letter-spacing:0.4px;margin-right:-0.4px">90.00</div>
<svg style="position:absolute;left:941px;top:215px" width="12" height="16" viewBox="0 0 12 16"><path d="M1.20 2.72 C2.40 0.32 3.96 0.64 3.96 3.52 V12.00 C3.96 14.88 5.64 15.36 7.44 15.36 C10.08 15.36 11.40 13.44 11.16 11.20 C10.92 9.28 9.60 8.80 8.64 9.44 C7.68 10.08 7.92 11.20 8.88 11.52" fill="none" stroke="#242424" stroke-width="2.0"/><path d="M0 6.40 H12" stroke="#242424" stroke-width="1.90"/></svg>
<div class="t" style="left:320.70px;top:254px;font-size:14.8px;font-weight:bold;color:#242424;transform:scaleX(0.87);transform-origin:0 0;">CBC</div>
<div class="t" style="right:861.50px;top:253px;font-size:15.5px;font-weight:bold;color:#242424;">1</div>
<div class="t" id="t47" style="left:591.70px;top:254px;font-size:14.8px;font-weight:bold;color:#242424;letter-spacing:0.500px;">600.0...</div>
<div class="t" style="right:754.00px;top:253px;font-size:15.5px;font-weight:bold;color:#242424;">0</div>
<div class="t" style="right:689.00px;top:253px;font-size:15.5px;font-weight:bold;color:#242424;">10</div>
<div class="t" style="right:630.50px;top:253px;font-size:15.5px;font-weight:bold;color:#242424;letter-spacing:0.4px;margin-right:-0.4px">0.00</div>
<svg style="position:absolute;left:810px;top:252px" width="12" height="16" viewBox="0 0 12 16"><path d="M1.20 2.72 C2.40 0.32 3.96 0.64 3.96 3.52 V12.00 C3.96 14.88 5.64 15.36 7.44 15.36 C10.08 15.36 11.40 13.44 11.16 11.20 C10.92 9.28 9.60 8.80 8.64 9.44 C7.68 10.08 7.92 11.20 8.88 11.52" fill="none" stroke="#242424" stroke-width="2.0"/><path d="M0 6.40 H12" stroke="#242424" stroke-width="1.90"/></svg>
<div class="t" style="right:500.00px;top:253px;font-size:15.5px;font-weight:bold;color:#242424;letter-spacing:0.4px;margin-right:-0.4px">540.00</div>
<svg style="position:absolute;left:941px;top:252px" width="12" height="16" viewBox="0 0 12 16"><path d="M1.20 2.72 C2.40 0.32 3.96 0.64 3.96 3.52 V12.00 C3.96 14.88 5.64 15.36 7.44 15.36 C10.08 15.36 11.40 13.44 11.16 11.20 C10.92 9.28 9.60 8.80 8.64 9.44 C7.68 10.08 7.92 11.20 8.88 11.52" fill="none" stroke="#242424" stroke-width="2.0"/><path d="M0 6.40 H12" stroke="#242424" stroke-width="1.90"/></svg>
<div class="t" style="left:320.70px;top:291px;font-size:14.8px;font-weight:bold;color:#242424;transform:scaleX(0.87);transform-origin:0 0;">FBS</div>
<div class="t" style="right:861.50px;top:290px;font-size:15.5px;font-weight:bold;color:#242424;">1</div>
<div class="t" id="t48" style="left:591.70px;top:291px;font-size:14.8px;font-weight:bold;color:#242424;letter-spacing:0.500px;">100.0...</div>
<div class="t" style="right:754.00px;top:290px;font-size:15.5px;font-weight:bold;color:#242424;">0</div>
<div class="t" style="right:689.00px;top:290px;font-size:15.5px;font-weight:bold;color:#242424;">10</div>
<div class="t" style="right:630.50px;top:290px;font-size:15.5px;font-weight:bold;color:#242424;letter-spacing:0.4px;margin-right:-0.4px">0.00</div>
<svg style="position:absolute;left:810px;top:289px" width="12" height="16" viewBox="0 0 12 16"><path d="M1.20 2.72 C2.40 0.32 3.96 0.64 3.96 3.52 V12.00 C3.96 14.88 5.64 15.36 7.44 15.36 C10.08 15.36 11.40 13.44 11.16 11.20 C10.92 9.28 9.60 8.80 8.64 9.44 C7.68 10.08 7.92 11.20 8.88 11.52" fill="none" stroke="#242424" stroke-width="2.0"/><path d="M0 6.40 H12" stroke="#242424" stroke-width="1.90"/></svg>
<div class="t" style="right:500.00px;top:290px;font-size:15.5px;font-weight:bold;color:#242424;letter-spacing:0.4px;margin-right:-0.4px">90.00</div>
<svg style="position:absolute;left:941px;top:289px" width="12" height="16" viewBox="0 0 12 16"><path d="M1.20 2.72 C2.40 0.32 3.96 0.64 3.96 3.52 V12.00 C3.96 14.88 5.64 15.36 7.44 15.36 C10.08 15.36 11.40 13.44 11.16 11.20 C10.92 9.28 9.60 8.80 8.64 9.44 C7.68 10.08 7.92 11.20 8.88 11.52" fill="none" stroke="#242424" stroke-width="2.0"/><path d="M0 6.40 H12" stroke="#242424" stroke-width="1.90"/></svg>
<div style="position:absolute;left:282px;top:742px;width:680px;height:1px;background:#e2e2e2"></div>
<div style="position:absolute;left:282px;top:743px;width:680px;height:39px;background:#f8f8f8"></div>
<div style="position:absolute;left:832.5px;top:751.5px;width:120px;height:40px;background:#fff;border:1px solid #e0e0e0;border-radius:5px;box-sizing:border-box"></div>
<div class="t" id="t49" style="left:846.00px;top:764px;font-size:14.8px;font-weight:bold;color:#242424;letter-spacing:0.327px;">SUM=720.0...</div>
<div style="position:absolute;left:271px;top:783px;width:1169px;height:39px;background:#f3f3f3"></div>
<div style="position:absolute;left:962px;top:101px;width:1px;height:681px;background:#d2d2d2"></div>
<div class="t" id="t50" style="left:973.50px;top:101px;font-size:15.5px;font-weight:normal;color:#242424;letter-spacing:0.513px;">Patient:*</div>
<div style="position:absolute;left:973px;top:124px;width:440px;height:36px;background:#fff;border:1px solid #e3e3e3;border-bottom:1px solid #a9a9a9;border-radius:4px;box-sizing:border-box"></div>
<div class="t" id="t51" style="left:981.00px;top:134px;font-size:15.5px;font-weight:normal;color:#242424;letter-spacing:0.152px;">Patrice Miller (R2020258963)</div>
<svg style="position:absolute;left:1392.3px;top:138.8px" width="10" height="6.5" viewBox="0 0 10 6.5"><path d="M0.8 0.8 L4.8 4.8 L8.8 0.8" fill="none" stroke="#242424" stroke-width="1.0"/></svg>
<div class="t" id="t52" style="left:973.50px;top:173px;font-size:15.5px;font-weight:normal;color:#242424;letter-spacing:0.220px;">Date:*</div>
<div class="t" id="t53" style="left:1198.50px;top:173px;font-size:15.5px;font-weight:normal;color:#242424;letter-spacing:1.020px;">Memo:*</div>
<div style="position:absolute;left:973px;top:196px;width:215px;height:36px;background:#fff;border:1px solid #e3e3e3;border-bottom:1px solid #a9a9a9;border-radius:4px;box-sizing:border-box"></div>
<div class="t" id="t54" style="left:980.80px;top:206px;font-size:15.5px;font-weight:normal;color:#242424;letter-spacing:1.000px;">5/11/2023</div>
<svg style="position:absolute;left:1167.5px;top:210.5px" width="10" height="6.5" viewBox="0 0 10 6.5"><path d="M0.8 0.8 L4.8 4.8 L8.8 0.8" fill="none" stroke="#242424" stroke-width="1.0"/></svg>
<div style="position:absolute;left:1198px;top:196px;width:215px;height:36px;background:#fff;border:1px solid #e3e3e3;border-bottom:1px solid #a9a9a9;border-radius:4px;box-sizing:border-box"></div>
<div class="t" id="t55" style="left:1205.30px;top:206px;font-size:15.5px;font-weight:normal;color:#242424;letter-spacing:0.300px;">Auto</div>
<div class="t" id="t56" style="left:973.50px;top:252px;font-size:15.5px;font-weight:normal;color:#242424;letter-spacing:0.058px;">Referred By Doctor:*</div>
<div class="t" id="t57" style="left:1198.50px;top:252px;font-size:15.5px;font-weight:normal;color:#242424;letter-spacing:0.410px;">Introducer:</div>
<div style="position:absolute;left:973px;top:275px;width:215px;height:36px;background:#fff;border:1px solid #e3e3e3;border-bottom:1px solid #a9a9a9;border-radius:4px;box-sizing:border-box"></div>
<div class="t" id="t58" style="left:980.40px;top:285px;font-size:15.5px;font-weight:normal;color:#242424;letter-spacing:-0.042px;">Professor Dr. Elaine Mat...</div>
<svg style="position:absolute;left:1167.5px;top:290px" width="10" height="6.5" viewBox="0 0 10 6.5"><path d="M0.8 0.8 L4.8 4.8 L8.8 0.8" fill="none" stroke="#242424" stroke-width="1.0"/></svg>
<div style="position:absolute;left:1198px;top:275px;width:215px;height:36px;background:#fff;border:1px solid #e3e3e3;border-bottom:1px solid #a9a9a9;border-radius:4px;box-sizing:border-box"></div>
<svg style="position:absolute;left:1392.3px;top:290px" width="10" height="6.5" viewBox="0 0 10 6.5"><path d="M0.8 0.8 L4.8 4.8 L8.8 0.8" fill="none" stroke="#242424" stroke-width="1.0"/></svg>
<div class="t" id="t59" style="left:973.50px;top:324px;font-size:15.5px;font-weight:normal;color:#242424;letter-spacing:0.180px;">Notes:</div>
<div style="position:absolute;left:973px;top:347px;width:440px;height:110px;background:#fff;border:1px solid #e3e3e3;border-bottom:1px solid #a9a9a9;border-radius:4px;box-sizing:border-box"></div>
<div style="position:absolute;left:1394px;top:349px;width:17px;height:105.5px;background:#f3f3f3"></div>
<div class="t" id="t60" style="left:973.50px;top:477px;font-size:15.5px;font-weight:normal;color:#242424;letter-spacing:0.150px;">Investigation Status:</div>
<div style="position:absolute;left:1193px;top:468px;width:220px;height:35px;background:#fff;border:1px solid #e3e3e3;border-bottom:1px solid #a9a9a9;border-radius:4px;box-sizing:border-box"></div>
<div class="t" id="t61" style="left:1200.20px;top:477px;font-size:15.5px;font-weight:normal;color:#242424;letter-spacing:-0.278px;">Processing</div>
<svg style="position:absolute;left:1392.3px;top:482px" width="10" height="6.5" viewBox="0 0 10 6.5"><path d="M0.8 0.8 L4.8 4.8 L8.8 0.8" fill="none" stroke="#242424" stroke-width="1.0"/></svg>
<div class="t" id="t62" style="left:973.50px;top:516px;font-size:15.5px;font-weight:normal;color:#242424;letter-spacing:0.089px;">Appr Delivery Time:</div>
<div style="position:absolute;left:973px;top:540px;width:440px;height:35px;background:#fff;border:1px solid #e3e3e3;border-bottom:2px solid #0f6cbd;border-radius:4px;box-sizing:border-box"></div>
<div style="position:absolute;left:980px;top:546px;width:9px;height:21px;background:#c7dcf0"></div>
<div class="t" id="t63" style="left:980.80px;top:549px;font-size:15.5px;font-weight:normal;color:#242424;letter-spacing:0.606px;">5/11/2023 6:03 PM</div>
<div style="position:absolute;left:989px;top:546px;width:1px;height:21px;background:#111"></div>
<svg style="position:absolute;left:1392.3px;top:553px" width="10" height="6.5" viewBox="0 0 10 6.5"><path d="M0.8 0.8 L4.8 4.8 L8.8 0.8" fill="none" stroke="#242424" stroke-width="1.0"/></svg>
<div class="t" id="t64" style="left:973.50px;top:595px;font-size:15.5px;font-weight:normal;color:#242424;letter-spacing:0.226px;">Additional Customer Payment:</div>
<div style="position:absolute;left:1193px;top:586px;width:220px;height:35px;background:#fff;border:1px solid #e3e3e3;border-bottom:1px solid #a9a9a9;border-radius:4px;box-sizing:border-box"></div>
<div class="t" style="right:66.00px;top:595px;font-size:15.5px;font-weight:normal;color:#242424;">0.00</div>
<svg style="position:absolute;left:1374px;top:595.5px" width="9" height="12.5" viewBox="0 0 9 12.5"><path d="M0.90 2.12 C1.80 0.25 2.97 0.50 2.97 2.75 V9.38 C2.97 11.62 4.23 12.00 5.58 12.00 C7.56 12.00 8.55 10.50 8.37 8.75 C8.19 7.25 7.20 6.88 6.48 7.38 C5.76 7.88 5.94 8.75 6.66 9.00" fill="none" stroke="#242424" stroke-width="1.1"/><path d="M0 5.00 H9" stroke="#242424" stroke-width="1.04"/></svg>
<svg style="position:absolute;left:1392.3px;top:593px" width="10" height="6.5" viewBox="0 0 10 6.5"><path d="M0.8 5.3 L4.8 1.2 L8.8 5.3" fill="none" stroke="#242424" stroke-width="1.0"/></svg>
<svg style="position:absolute;left:1392.3px;top:607px" width="10" height="6.5" viewBox="0 0 10 6.5"><path d="M0.8 0.8 L4.8 4.8 L8.8 0.8" fill="none" stroke="#242424" stroke-width="1.0"/></svg>
<div style="position:absolute;left:973px;top:630px;width:440px;height:79px;background:#fff;border:1px solid #d8d8d8;border-radius:5px;box-sizing:border-box"></div>
<div style="position:absolute;left:974px;top:631px;width:438px;height:34px;background:#fafafa;border-radius:4px 4px 0 0"></div>
<div style="position:absolute;left:974px;top:665px;width:437.5px;height:1px;background:#e2e2e2"></div>
<div style="position:absolute;left:1004px;top:632px;width:1px;height:67px;background:#e2e2e2"></div>
<div style="position:absolute;left:1240px;top:632px;width:1px;height:67px;background:#e2e2e2"></div>
<div style="position:absolute;left:1004px;top:698px;width:407.5px;height:1px;background:#e2e2e2"></div>
<div class="t" id="t65" style="left:1012.30px;top:643px;font-size:12.4px;font-weight:normal;color:#242424;letter-spacing:-0.008px;">Account Ledger</div>
<div class="t" id="t66" style="left:1248.50px;top:643px;font-size:12.4px;font-weight:normal;color:#242424;letter-spacing:0.180px;">Amount</div>
<svg style="position:absolute;left:983px;top:676px" width="13" height="13" viewBox="0 0 13 13"><circle cx="6.5" cy="6.5" r="2.2" fill="none" stroke="#ff8c00" stroke-width="1"/><path d="M6.5 0.6 V2.8 M6.5 10.2 V12.4 M0.6 6.5 H2.8 M10.2 6.5 H12.4 M2.3 2.3 L3.8 3.8 M9.2 9.2 L10.7 10.7 M2.3 10.7 L3.8 9.2 M9.2 3.8 L10.7 2.3" stroke="#ff8c00" stroke-width="0.9"/></svg>
<div class="t" id="t67" style="left:973.50px;top:722px;font-size:15.5px;font-weight:normal;color:#242424;letter-spacing:0.157px;">Deposit:</div>
<div style="position:absolute;left:973px;top:745px;width:440px;height:36px;background:#fff;border:1px solid #e3e3e3;border-bottom:1px solid #a9a9a9;border-radius:4px;box-sizing:border-box"></div>
<div class="t" style="right:57.00px;top:755px;font-size:15.5px;font-weight:normal;color:#242424;">720</div>
<svg style="position:absolute;left:1392.3px;top:753px" width="10" height="6.5" viewBox="0 0 10 6.5"><path d="M0.8 5.3 L4.8 1.2 L8.8 5.3" fill="none" stroke="#242424" stroke-width="1.0"/></svg>
<svg style="position:absolute;left:1392.3px;top:767px" width="10" height="6.5" viewBox="0 0 10 6.5"><path d="M0.8 0.8 L4.8 4.8 L8.8 0.8" fill="none" stroke="#242424" stroke-width="1.0"/></svg>
<div style="position:absolute;left:1430px;top:128px;width:3px;height:571px;background:#8a8a8a;border-radius:1.5px"></div>
<div style="position:absolute;left:0px;top:782px;width:1440px;height:1px;background:#d4d4d4"></div>
<div class="t" id="t68" style="left:16.50px;top:796px;font-size:12.6px;font-weight:normal;color:#242424;letter-spacing:-0.020px;">User: Admin</div>
<div style="position:absolute;left:92px;top:790px;width:1px;height:25px;background:#d0d0d0"></div>
<svg style="position:absolute;left:1398px;top:795px" width="12" height="15" viewBox="0 0 12 15"><path d="M6 0.3 C8.8 0.3 10 2.6 10 5 V8.6 L11.8 11.6 H0.2 L2 8.6 V5 C2 2.6 3.2 0.3 6 0.3 Z" fill="#bcbcbc"/><rect x="5" y="12.6" width="2" height="1" fill="#bcbcbc"/></svg>
<div class="t" style="left:1415.50px;top:796px;font-size:12px;font-weight:normal;color:#b3b3b3;">0</div>
</body></html>
